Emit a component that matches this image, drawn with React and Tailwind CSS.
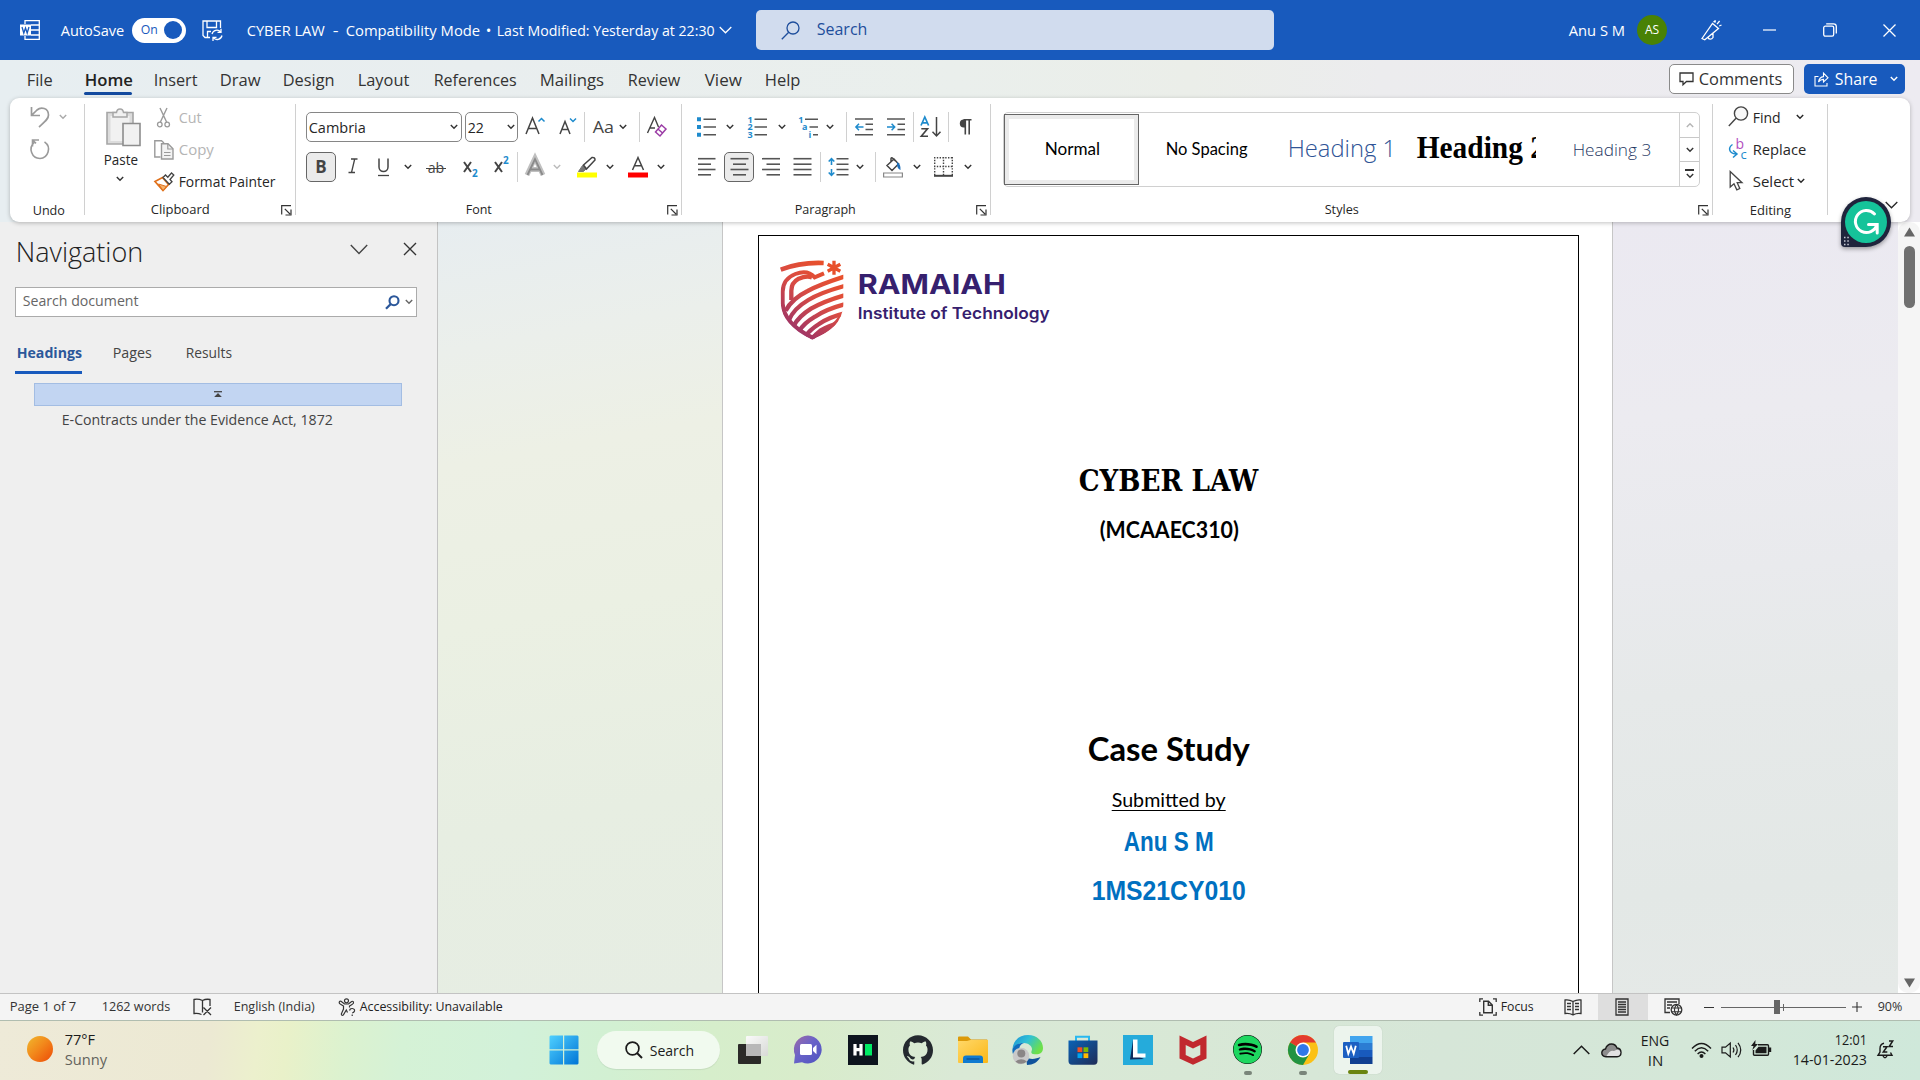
import React, { useLayoutEffect, useRef, useState } from "react";
import { FaSpotify } from "react-icons/fa";
import { SiGithub } from "react-icons/si";

// A one-line label whose glyphs are condensed or widened to fill a given width.
function Fit({ w, className = "", children }) {
  const ref = useRef(null);
  const [style, setStyle] = useState({});
  useLayoutEffect(() => {
    const natural = ref.current.offsetWidth;
    setStyle({ transform: `translateX(0.7px) scaleX(${(w - 1) / natural})` });
  }, [w]);
  return (
    <span className={`block shrink-0 whitespace-nowrap ${className}`} style={{ width: w }}>
      <span ref={ref} className="inline-block origin-left" style={style}>
        {children}
      </span>
    </span>
  );
}

function Svg({ w, h, className = "", children, vb }) {
  return (
    <svg
      width={w}
      height={h}
      viewBox={vb || `0 0 ${w} ${h}`}
      fill="none"
      stroke="currentColor"
      className={`block shrink-0 overflow-visible ${className}`}
    >
      {children}
    </svg>
  );
}

const Chev = ({ className = "text-[#333]" }) => (
  <Svg w={8} h={6} className={className}>
    <path d="M.8 1L4 4.3L7.2 1" strokeWidth="1.4" />
  </Svg>
);

const Sep = ({ className }) => <div className={`h-[30px] w-px shrink-0 bg-[#d0d0d0] ${className}`} />;
const GroupSep = () => <div className="mt-[6px] h-[111px] w-px shrink-0 bg-[#d0d0d0]" />;

const Launcher = ({ className }) => (
  <Svg w={11} h={11} className={`text-[#333] ${className}`}>
    <path d="M.7 9.5V.7H10M3.8 3.8L9 9M10 4.5V10H4.5" strokeWidth="1.2" />
  </Svg>
);

const Lines = ({ rows, h = 20, w = 19 }) => (
  <Svg w={w} h={h} className="text-[#555]">
    {rows.map(([x1, x2, y], i) => (
      <path key={i} d={`M${x1} ${y}H${x2}`} strokeWidth="1.6" />
    ))}
  </Svg>
);

function TitleBar() {
  return (
    <header className="flex h-[60px] shrink-0 items-center bg-[#185abd] text-[15px] text-white">
      <Svg w={20} h={20} className="ml-[20px]">
        <path d="M5 4V.7H19.3V19.3H5V16M11 5H19M11 10H19M11 15H19" strokeWidth="1.3" />
        <path d="M0 4.5H11V15.5H0Z" fill="white" stroke="none" />
        <path d="M2 7L3.8 13L5.5 8L7.2 13L9 7" stroke="#185abd" strokeWidth="1.3" />
      </Svg>
      <Fit w={65} className="ml-[20px]">AutoSave</Fit>
      <div className="ml-[7px] flex h-[25px] w-[54px] shrink-0 items-center rounded-full bg-white pl-[8px] text-[13px] text-[#185abd]">
        <Fit w={18}>On</Fit>
        <div className="ml-[6px] size-[18px] rounded-full bg-[#185abd]" />
      </div>
      <Svg w={21} h={21} className="ml-[16px]">
        <path d="M8 17.5H3L1 15.5V1H18.5V8M5 1V7.5H14.5V1M5.5 17.5V11.5H9" strokeWidth="1.3" />
        <path d="M10 14A5 5 0 0 1 18.7 12M19 8.8V12.3H15.5M20 15.5A5 5 0 0 1 11.3 17.7M11 21V17.3H14.5" strokeWidth="1.3" />
      </Svg>
      <Fit w={79} className="ml-[23px]">CYBER LAW</Fit>
      <Fit w={7} className="ml-[7px]">-</Fit>
      <Fit w={135} className="ml-[6px]">Compatibility Mode</Fit>
      <Fit w={7} className="ml-[5px]">•</Fit>
      <Fit w={219} className="ml-[4px]">Last Modified: Yesterday at 22:30</Fit>
      <Svg w={13} h={8} className="ml-[4px]">
        <path d="M.7 1L6.5 6.8L12.3 1" strokeWidth="1.3" />
      </Svg>
      <div className="ml-[24px] flex h-[40px] w-[518px] shrink-0 items-center rounded-[5px] bg-[#d1dcee] text-[#1e4e9c]">
        <Svg w={19} h={19} className="ml-[25px]">
          <circle cx="12" cy="7" r="6" strokeWidth="1.3" />
          <path d="M7.7 11.3L.8 18.2" strokeWidth="1.3" />
        </Svg>
        <Fit w={52} className="-mt-[2px] ml-[16px] text-[16px]">Search</Fit>
      </div>
      <Fit w={57} className="ml-[294px]">Anu S M</Fit>
      <div className="ml-[12px] flex size-[30px] shrink-0 items-center justify-center rounded-full bg-[#498205] text-[12px]">
        AS
      </div>
      <Svg w={21} h={21} className="ml-[34px]">
        <path d="M1 18.5L11.5 3.5L17.5 8.5L3.8 19.8L1 18.5ZM7 17.5C7.5 19.5 10.5 20 12 17.5V13M12.5 2L14.5 .5M16 4.2L18.6 1M18.2 6L20.5 5M14 2.7L14.4 .5" strokeWidth="1.3" />
      </Svg>
      <Svg w={13} h={13} className="ml-[41px]">
        <path d="M0 6H13" strokeWidth="1.2" />
      </Svg>
      <Svg w={14} h={14} className="ml-[47px]">
        <rect x=".7" y="3.2" width="10" height="10" rx="1.6" strokeWidth="1.3" />
        <path d="M3.2 .8H10.5Q13.3 .8 13.3 3.5V10.6" strokeWidth="1.3" />
      </Svg>
      <Svg w={13} h={13} className="ml-[46px]">
        <path d="M.5 .5L12.5 12.5M12.5 .5L.5 12.5" strokeWidth="1.3" />
      </Svg>
    </header>
  );
}

function Tabs() {
  return (
    <nav className="flex h-[38px] shrink-0 items-start text-[17px] leading-[40px] text-[#333]">
      <Fit w={27} className="ml-[26px]">File</Fit>
      <div className="ml-[30px] flex w-[50px] shrink-0 flex-col items-center">
        <Fit w={49} className="h-[32px] font-semibold text-[#222]">Home</Fit>
        <div className="h-[3px] w-[48px] rounded-full bg-[#134a9f]" />
      </div>
      <Fit w={45} className="ml-[20px]">Insert</Fit>
      <Fit w={42} className="ml-[21px]">Draw</Fit>
      <Fit w={53} className="ml-[21px]">Design</Fit>
      <Fit w={53} className="ml-[22px]">Layout</Fit>
      <Fit w={84} className="ml-[23px]">References</Fit>
      <Fit w={65} className="ml-[22px]">Mailings</Fit>
      <Fit w={54} className="ml-[23px]">Review</Fit>
      <Fit w={38} className="ml-[23px]">View</Fit>
      <Fit w={37} className="ml-[22px]">Help</Fit>
      <div className="mt-[4px] ml-[868px] flex h-[30px] w-[125px] shrink-0 items-center rounded-[5px] border border-[#8a8a8a] bg-white leading-[28px]">
        <Svg w={15} h={14} className="ml-[9px]">
          <path d="M1 1H14V9.5H7.5L4 12.8V9.5H1Z" strokeWidth="1.3" />
        </Svg>
        <Fit w={85} className="ml-[4px]">Comments</Fit>
      </div>
      <div className="mt-[4px] ml-[10px] flex h-[30px] w-[101px] shrink-0 items-center rounded-[5px] bg-[#185abd] leading-[28px] text-white">
        <Svg w={15} h={15} className="ml-[10px]">
          <path d="M4.5 4.5H1V14H13V11M4.5 10C5 6.5 7 4.8 9.5 4.6V1.2L14 5.8L9.5 10V7.4C7 7.4 5.8 8.2 4.5 10Z" strokeWidth="1.1" />
        </Svg>
        <Fit w={44} className="ml-[5px]">Share</Fit>
        <Chev className="ml-[12px] text-white" />
      </div>
    </nav>
  );
}

function UndoGroup() {
  return (
    <section className="flex w-[74px] shrink-0 flex-col">
      <div className="flex h-[103px] flex-col pt-[8px] text-[#9a9a9a]">
        <div className="flex items-center pl-[20px]">
          <Svg w={20} h={22}>
            <path d="M1.5 1V9.5H10M1.8 9.2L7 4C11 .5 18.5 2 18.5 9C18.5 13 15 15.5 9 21" strokeWidth="1.7" />
          </Svg>
          <Chev className="ml-[9px] text-[#aaa]" />
        </div>
        <Svg w={22} h={22} className="mt-[10px] ml-[19px]">
          <path d="M3.5 8.5V2H10M3.8 2.2L7 5.4M15.5 3.8C23 9 19 20.5 11 20.5C2.5 20.5 -.8 10 5 4.7" strokeWidth="1.6" />
        </Svg>
      </div>
      <Fit w={33} className="-mt-px ml-[22px] text-[13px] leading-[20px]">Undo</Fit>
    </section>
  );
}

function ClipboardGroup() {
  return (
    <section className="flex w-[210px] shrink-0 flex-col">
      <div className="flex h-[103px]">
        <div className="ml-[18px] flex w-[37px] shrink-0 flex-col items-center pt-[10px]">
          <Svg w={35} h={39} className="ml-[4px]">
            <path d="M1 4.5H27V36H1Z" fill="#dcdcdc" stroke="#a6a6a6" strokeWidth="1.6" />
            <path d="M4.5 8H23.5V33H4.5Z" fill="#f1f1f1" stroke="none" />
            <path d="M7 9V4.5H10.5C11 -.3 17 -.3 17.5 4.5H21V9Z" fill="#f1f1f1" stroke="#a6a6a6" strokeWidth="1.5" />
            <path d="M17 15.5H34V37.5H17Z" fill="#f1f1f1" stroke="#8d8d8d" strokeWidth="1.6" />
          </Svg>
          <Fit w={35} className="mt-[3px] mr-[2px] leading-[19px]">Paste</Fit>
          <Chev className="mt-[7px] mr-[3px] text-[#333]" />
        </div>
        <div className="ml-[14px] flex flex-col pt-[4px] text-[#b5b5b5]">
          <div className="flex h-[32px] items-center">
            <Svg w={20} h={20} className="text-[#9a9a9a]">
              <path d="M6 0L12.6 14M13 0L6.4 14" strokeWidth="1.4" />
              <circle cx="5.8" cy="16.5" r="2.3" strokeWidth="1.3" />
              <circle cx="13.2" cy="16.5" r="2.3" strokeWidth="1.3" />
            </Svg>
            <Fit w={24} className="-mt-[2px] ml-[4px]">Cut</Fit>
          </div>
          <div className="flex h-[32px] items-center">
            <Svg w={20} h={20} className="text-[#9a9a9a]">
              <path d="M6.5 17H.8V.8H7.5L10 3" strokeWidth="1.4" />
              <path d="M7.5 3.8H14L19 8.8V19H7.5Z" fill="#f3f3f3" strokeWidth="1.4" />
              <path d="M13.8 4V9H19M10 12.5H16.5M10 15.5H16.5" strokeWidth="1.2" />
            </Svg>
            <Fit w={36} className="-mt-[2px] ml-[4px]">Copy</Fit>
          </div>
          <div className="flex h-[32px] items-center text-[#262626]">
            <Svg w={21} h={20}>
              <path d="M8.5 5.5L14.5 12.5L9 18.5L1 9.5Z" fill="#fff" stroke="#e0701a" strokeWidth="1.7" />
              <path d="M4.5 12L12.5 14.5L9 18.5Z" fill="#f7b26a" stroke="#e0701a" strokeWidth="1" />
              <path d="M9 5.5L11.5 3L13.8 5.2L17.5 1L19.8 3L16 7.5L18 9.8L15.3 12.3Z" fill="#fff" stroke="#444" strokeWidth="1.3" />
            </Svg>
            <Fit w={98} className="-mt-[2px] ml-[3px]">Format Painter</Fit>
          </div>
        </div>
      </div>
      <div className="-mt-px flex items-center text-[13px] leading-[19px]">
        <Fit w={60} className="ml-[65px]">Clipboard</Fit>
        <Launcher className="mt-px ml-[71px]" />
      </div>
    </section>
  );
}

function FontGroup() {
  return (
    <section className="flex w-[385px] shrink-0 flex-col">
      <div className="h-[103px] pt-[14px] text-[#444]">
        <div className="flex h-[30px] items-center">
          <div className="ml-[10px] flex h-[30px] w-[156px] shrink-0 items-center rounded-[5px] border border-[#868686] text-[#262626]">
            <Fit w={58} className="ml-[1px]">Cambria</Fit>
            <Chev className="ml-[84px] text-[#333]" />
          </div>
          <div className="ml-[3px] flex h-[30px] w-[53px] shrink-0 items-center rounded-[5px] border border-[#868686] text-[#262626]">
            <Fit w={17} className="ml-[1px]">22</Fit>
            <Chev className="ml-[23px] text-[#333]" />
          </div>
          <Svg w={20} h={22} className="ml-[7px]">
            <path d="M1 18L7.5 2L14 18M3 12.5H12" strokeWidth="1.5" />
            <path d="M13.5 5.5L16.5 2.5L19.5 5.5" stroke="#1e8bcd" strokeWidth="1.5" />
          </Svg>
          <Svg w={18} h={22} className="ml-[14px]">
            <path d="M1 18L6 5.5L11 18M3 13.5H9" strokeWidth="1.5" />
            <path d="M11 2.5L14 5.5L17 2.5" stroke="#1e8bcd" strokeWidth="1.5" />
          </Svg>
          <Sep className="ml-[7px]" />
          <Fit w={22} className="ml-[7px] text-[17px]">Aa</Fit>
          <Chev className="ml-[5px] text-[#333]" />
          <Sep className="ml-[12px]" />
          <Svg w={22} h={22} className="ml-[6px]">
            <path d="M1.5 17L8.5 1.5L12.5 11M4 12H9" strokeWidth="1.4" />
            <path d="M9.5 16L15.5 9L20 13L14 20Z M12 13L16.8 17.2" fill="#fff" stroke="#9b3ba5" strokeWidth="1.5" />
          </Svg>
        </div>
        <div className="mt-[10px] flex h-[30px] items-center">
          <div className="ml-[10px] flex h-[30px] w-[30px] shrink-0 items-center justify-center rounded-[5px] border border-[#666] bg-[#ebebeb] pb-px text-[17px] font-bold">
            B
          </div>
          <Svg w={10} h={16} className="mt-[-2px] ml-[12px]">
            <path d="M3 1H9.5M.5 14.5H7M6.7 1L3.5 14.5" strokeWidth="1.3" />
          </Svg>
          <Svg w={13} h={20} className="ml-[19px]">
            <path d="M2 1.5V10C2 16 11 16 11 10V1.5" strokeWidth="1.5" />
            <path d="M1 18.5H12" strokeWidth="1.3" />
          </Svg>
          <Chev className="ml-[14px] text-[#333]" />
          <span className="relative ml-[15px] w-[18px] shrink-0 text-center text-[15px]">
            <Fit w={18}>ab</Fit>
            <span className="absolute top-[12px] left-[-1px] h-[1.5px] w-[20px] bg-[#444]" />
          </span>
          <Svg w={16} h={24} className="ml-[18px]">
            <path d="M1 7L8 17M8 7L1 17" strokeWidth="2" />
            <text x="9" y="22" fontSize="10" fontWeight="700" fill="#1e8bcd" stroke="none">2</text>
          </Svg>
          <Svg w={16} h={24} className="ml-[15px]">
            <path d="M1 7L8 17M8 7L1 17" strokeWidth="2" />
            <text x="9" y="9" fontSize="10" fontWeight="700" fill="#1e8bcd" stroke="none">2</text>
          </Svg>
          <Sep className="ml-[7px]" />
          <Svg w={20} h={22} className="ml-[7px]">
            <path d="M2 19L10 2L18 19M5 13.5H15" stroke="#c0c0c0" strokeWidth="5" />
            <path d="M2.5 19L10 3L17.5 19M5 13.5H15" stroke="#8a8a8a" strokeWidth="1.8" />
          </Svg>
          <Chev className="ml-[8px] text-[#bbb]" />
          <Svg w={20} h={22} className="ml-[16px]">
            <path d="M0 16.5H20V21.5H0Z" fill="#ffff00" stroke="none" />
            <path d="M1.5 15.5L5.5 9.5L9 13L6.5 15.5Z" fill="#777" stroke="#777" />
            <path d="M6.5 9L15 1.5Q18 1 18 4L9.5 13Z" fill="#fff" strokeWidth="1.5" />
          </Svg>
          <Chev className="ml-[9px] text-[#333]" />
          <Svg w={20} h={22} className="ml-[14px]">
            <path d="M0 16.5H20V21.5H0Z" fill="#ff0000" stroke="none" />
            <path d="M4.5 14L10 1.5L15.5 14M6.3 9.8H13.7" strokeWidth="1.5" />
          </Svg>
          <Chev className="ml-[9px] text-[#333]" />
        </div>
      </div>
      <div className="-mt-px flex items-center text-[13px] leading-[19px]">
        <Fit w={27} className="ml-[169px]">Font</Fit>
        <Launcher className="mt-px ml-[175px]" />
      </div>
    </section>
  );
}

function ParagraphGroup() {
  const small = { fontSize: 9, fontWeight: 700, fill: "#1e8bcd", stroke: "none" };
  return (
    <section className="flex w-[308px] shrink-0 flex-col">
      <div className="h-[103px] pt-[14px] text-[#444]">
        <div className="flex h-[30px] items-center">
          <Svg w={19} h={20} className="ml-[15px] text-[#555]">
            <path d="M0 .3H4V4.3H0ZM0 8H4V12H0ZM0 15.7H4V19.7H0Z" fill="#1e8bcd" stroke="none" />
            <path d="M6.5 2.3H19M6.5 10H19M6.5 17.7H19" strokeWidth="1.5" />
          </Svg>
          <Chev className="ml-[10px] text-[#333]" />
          <Svg w={19} h={22} className="ml-[14px] text-[#555]">
            <text x="-.5" y="6.8" {...small}>1</text>
            <text x="-.5" y="14.3" {...small}>2</text>
            <text x="-.5" y="21.8" {...small}>3</text>
            <path d="M6.5 3.3H19M6.5 11H19M6.5 18.7H19" strokeWidth="1.5" />
          </Svg>
          <Chev className="ml-[11px] text-[#333]" />
          <Svg w={19} h={22} className="ml-[13px] text-[#555]">
            <text x="-.8" y="6.8" {...small}>1</text>
            <text x="3" y="14.3" {...small}>a</text>
            <text x="9.5" y="21.8" {...small}>i</text>
            <path d="M6 3.3H19M10.5 11H19M14 18.7H19" strokeWidth="1.5" />
          </Svg>
          <Chev className="ml-[8px] text-[#333]" />
          <Sep className="ml-[12px]" />
          <Svg w={18} h={20} className="ml-[8px] text-[#555]">
            <path d="M0 2H18M10.5 7.3H18M10.5 12.5H18M0 17.8H18" strokeWidth="1.5" />
            <path d="M8.5 10H1M4 6.8L.9 10L4 13.2" stroke="#1e8bcd" strokeWidth="1.5" />
          </Svg>
          <Svg w={18} h={20} className="ml-[14px] text-[#555]">
            <path d="M0 2H18M10.5 7.3H18M10.5 12.5H18M0 17.8H18" strokeWidth="1.5" />
            <path d="M0 10H7.5M4.6 6.8L7.7 10L4.6 13.2" stroke="#1e8bcd" strokeWidth="1.5" />
          </Svg>
          <Sep className="ml-[8px]" />
          <Svg w={21} h={22} className="ml-[6px]">
            <path d="M1 9.5L4.8 1L8.6 9.5M2.2 6.8H7.4" stroke="#1e8bcd" strokeWidth="1.7" />
            <path d="M1.3 12.8H7.5L1.3 20.2H8" strokeWidth="1.6" />
            <path d="M16.5 1V20M12.5 15.8L16.5 20L20.5 15.8" strokeWidth="1.5" />
          </Svg>
          <Sep className="ml-[7px]" />
          <Svg w={13} h={18} className="ml-[10px]">
            <path d="M6 1.5H4.8A4 4 0 0 0 4.8 9.5H6Z" fill="#444" stroke="none" />
            <path d="M4.5 1.8H12.5M6.3 1.5V16.5M10.2 1.5V16.5" strokeWidth="1.6" />
          </Svg>
        </div>
        <div className="mt-[10px] flex h-[30px] items-center">
          <div className="ml-[15px]">
            <Lines rows={[[1, 18.5, 1.7], [1, 14, 7.2], [1, 18.5, 12.5], [1, 14, 17.8]]} />
          </div>
          <div className="ml-[8px] flex h-[30px] w-[30px] shrink-0 items-center justify-center rounded-[5px] border border-[#666] bg-[#ebebeb]">
            <Lines rows={[[0.5, 18.5, 1.7], [3, 16, 7.2], [0.5, 18.5, 12.5], [3, 16, 17.8]]} />
          </div>
          <div className="ml-[8px]">
            <Lines w={18} rows={[[0, 18, 1.7], [4.5, 18, 7.2], [0, 18, 12.5], [4.5, 18, 17.8]]} />
          </div>
          <div className="ml-[13px]">
            <Lines rows={[[0.5, 18.5, 1.7], [0.5, 18.5, 7.2], [0.5, 18.5, 12.5], [0.5, 18.5, 17.8]]} />
          </div>
          <Sep className="ml-[8px]" />
          <Svg w={21} h={20} className="ml-[7px] text-[#555]">
            <path d="M8.5 1.7H20.5M8.5 7.2H20.5M8.5 12.5H20.5M8.5 17.8H20.5" strokeWidth="1.5" />
            <path d="M3.5 1.8V8M.7 4.5L3.5 1.7L6.3 4.5M3.5 12V18.2M.7 15.5L3.5 18.3L6.3 15.5" stroke="#1e8bcd" strokeWidth="1.6" />
          </Svg>
          <Chev className="ml-[7px] text-[#333]" />
          <Sep className="ml-[11px]" />
          <Svg w={20} h={22} className="ml-[7px]">
            <path d="M.6 17H19.4V21H.6Z" fill="#fff" stroke="#888" strokeWidth="1.2" />
            <path d="M4 9.5L11 3L15.5 8L9 14.5ZM8 5.5V2.5Q8.5 1 10 2.5L12.5 5" strokeWidth="1.5" />
            <path d="M14 6Q18 8 17.5 14Q14.5 13 14 9Z" fill="#1e6fb8" stroke="none" />
          </Svg>
          <Chev className="ml-[10px] text-[#333]" />
          <Svg w={19} h={20} className="ml-[13px]">
            <path d="M.7 0V19M18.3 0V19M9.5 0V19M0 .7H19M0 9.5H19" strokeWidth="1.4" strokeDasharray="1.4 1.4" />
            <path d="M0 18.8H19" strokeWidth="2" />
          </Svg>
          <Chev className="ml-[11px] text-[#333]" />
        </div>
      </div>
      <div className="-mt-px flex items-center text-[13px] leading-[19px]">
        <Fit w={62} className="ml-[112px]">Paragraph</Fit>
        <Launcher className="mt-px ml-[120px]" />
      </div>
    </section>
  );
}

function StylesGroup() {
  return (
    <section className="flex w-[721px] shrink-0 flex-col">
      <div className="h-[103px] pt-[14px]">
        <div className="ml-[12px] flex h-[75px] w-[697px] rounded-[5px] border border-[#d0d0d0] font-[Lato] text-[16.5px] text-black">
          <div className="mt-[1px] flex h-[71px] w-[135px] shrink-0 items-center justify-center border border-[#666] bg-white shadow-[inset_0_0_0_4px_#ebebeb]">
            <Fit w={56}>Normal</Fit>
          </div>
          <div className="flex w-[135px] shrink-0 items-center justify-center">
            <Fit w={83}>No Spacing</Fit>
          </div>
          <div className="flex w-[135px] shrink-0 items-center justify-center text-[#2f5496]">
            <Fit w={109} className="-mt-[3px] font-[Open_Sans] text-[24px] font-light">Heading 1</Fit>
          </div>
          <div className="flex w-[135px] shrink-0 items-center">
            <div className="ml-[7px] w-[120px] overflow-hidden whitespace-nowrap">
              <Fit w={129} className="-mt-[3px] font-[Liberation_Serif] text-[31px] font-bold">Heading 2</Fit>
            </div>
          </div>
          <div className="flex w-[135px] shrink-0 items-center justify-center text-[#1f3763]">
            <Fit w={80} className="font-[Open_Sans] text-[17px] font-light">Heading 3</Fit>
          </div>
          <div className="flex flex-1 flex-col border-l border-[#d0d0d0]">
            <div className="flex h-[24px] items-center justify-center">
              <Chev className="rotate-180 text-[#b5b5b5]" />
            </div>
            <div className="flex h-[25px] items-center justify-center border-y border-[#c8c8c8]">
              <Chev />
            </div>
            <div className="flex h-[24px] flex-col items-center justify-center gap-[2px]">
              <div className="h-[1.5px] w-[9px] bg-[#333]" />
              <Chev />
            </div>
          </div>
        </div>
      </div>
      <div className="-mt-px flex items-center text-[13px] leading-[19px]">
        <Fit w={35} className="ml-[333px]">Styles</Fit>
        <Launcher className="mt-px ml-[339px]" />
      </div>
    </section>
  );
}

function EditingGroup() {
  return (
    <section className="flex w-[114px] shrink-0 flex-col">
      <div className="flex h-[103px] flex-col pt-[4px]">
        <div className="flex h-[32px] items-center pl-[15px]">
          <Svg w={21} h={21} className="-mt-[3px] text-[#444]">
            <circle cx="13" cy="7.5" r="6.6" fill="#f8f8f8" strokeWidth="1.4" />
            <path d="M8 12.2L.8 20" strokeWidth="1.4" />
          </Svg>
          <Fit w={29} className="-mt-[2px] ml-[3px]">Find</Fit>
          <Chev className="-mt-[2px] ml-[15px]" />
        </div>
        <div className="flex h-[32px] items-center pl-[15px]">
          <Svg w={21} h={22} className="-mt-[2px]">
            <text x="7.5" y="11" fontSize="14" fill="#b24fc0" stroke="none">b</text>
            <text x="12.5" y="21" fontSize="13" fill="#1e8bcd" stroke="none">c</text>
            <path d="M4.5 6.5C0 9.5 .5 15.5 8 16M5 12.5L9 16L5 19.5" stroke="#1e8bcd" strokeWidth="1.5" />
          </Svg>
          <Fit w={55} className="-mt-[2px] ml-[3px]">Replace</Fit>
        </div>
        <div className="flex h-[32px] items-center pl-[15px]">
          <Svg w={21} h={22} className="-mt-[2px] text-[#444]">
            <path d="M2.2 1.5V17L6 13.8L8.8 19.8L11.8 18.5L9.2 12.7H14Z" strokeWidth="1.3" />
          </Svg>
          <Fit w={42} className="-mt-[2px] ml-[3px]">Select</Fit>
          <Chev className="-mt-[3px] ml-[3px]" />
        </div>
      </div>
      <Fit w={42} className="-mt-px ml-[36px] text-[13px] leading-[20px]">Editing</Fit>
    </section>
  );
}

function Ribbon() {
  return (
    <div className="relative z-10 mx-[10px] flex h-[124px] shrink-0 rounded-[9px] bg-white text-[15px] text-[#262626] shadow-[0_1px_4px_rgba(0,0,0,0.25)]">
      <UndoGroup />
      <GroupSep />
      <ClipboardGroup />
      <GroupSep />
      <FontGroup />
      <GroupSep />
      <ParagraphGroup />
      <GroupSep />
      <StylesGroup />
      <GroupSep />
      <EditingGroup />
      <GroupSep />
      <Svg w={13} h={8} className="mb-[13px] ml-[57px] self-end">
        <path d="M.7 1L6.5 6.8L12.3 1" strokeWidth="1.3" />
      </Svg>
      <Svg w={52} h={52} className="absolute top-[98px] left-[1830px] drop-shadow-[0_2px_2px_rgba(0,0,0,0.35)]">
        <path d="M26 1A25 25 0 0 1 26 51H5Q1 51 1 47V26A25 25 0 0 1 26 1Z" fill="#1f243c" stroke="none" />
        <circle cx="26" cy="26" r="21" fill="#15c39a" stroke="none" />
        <path d="M34.5 18A11 11 0 1 0 37 28.5M28.5 28.5H37.2V37" stroke="#fff" strokeWidth="3" strokeLinecap="round" />
        <path d="M4 41.5H9M4 45H9M4 48.5H9" stroke="#c8cad4" strokeWidth="1.5" strokeDasharray="1.5 1.8" />
      </Svg>
    </div>
  );
}

function NavigationPane() {
  return (
    <aside className="flex w-[438px] shrink-0 flex-col border-r border-[#c3c3c3] bg-[#efefef] pl-[15px] text-[#444]">
      <div className="flex h-[65px] items-start pt-[10px]">
        <Fit w={129} className="text-[27px] leading-[40px] font-light text-[#222]">Navigation</Fit>
        <Svg w={18} h={11} className="mt-[12px] ml-[206px]">
          <path d="M.8 1L9 9.4L17.2 1" strokeWidth="1.4" />
        </Svg>
        <Svg w={14} h={14} className="mt-[10px] ml-[35px] text-[#333]">
          <path d="M1 1L13 13M13 1L1 13" strokeWidth="1.4" />
        </Svg>
      </div>
      <div className="flex h-[30px] w-[402px] shrink-0 items-center border border-[#ababab] bg-white text-[15px] text-[#666]">
        <Fit w={117} className="ml-[6px] leading-[24px] pb-[4px]">Search document</Fit>
        <Svg w={15} h={15} className="ml-[246px] text-[#2b579a]">
          <circle cx="9" cy="5.7" r="4.5" strokeWidth="2.1" />
          <path d="M5.8 9L1 13.8" strokeWidth="2.3" />
        </Svg>
        <Chev className="ml-[5px]" />
      </div>
      <div className="mt-[20px] flex text-[15px] leading-[30px]">
        <div className="w-[67px]">
          <Fit w={66} className="ml-[1px] h-[34px] font-bold text-[#2b579a]">Headings</Fit>
          <div className="h-[3px] w-[67px] bg-[#185abd]" />
        </div>
        <Fit w={40} className="ml-[30px]">Pages</Fit>
        <Fit w={47} className="ml-[33px]">Results</Fit>
      </div>
      <div className="mt-[9px] ml-[19px] flex h-[23px] w-[368px] shrink-0 items-center justify-center border border-[#a3bde3] bg-[#c2d5f2]">
        <Svg w={8} h={7}>
          <path d="M0 .7H8" strokeWidth="1.3" />
          <path d="M4 2L7.8 6H.2Z" fill="#444" stroke="none" />
        </Svg>
      </div>
      <Fit w={272} className="ml-[46px] text-[15px] leading-[26px]">E-Contracts under the Evidence Act, 1872</Fit>
    </aside>
  );
}

function Crest() {
  return (
    <Svg w={64} h={81} vb="179 117 192 243">
      <defs>
        <linearGradient id="crest" gradientUnits="userSpaceOnUse" x1="340" y1="150" x2="210" y2="330">
          <stop offset="0" stopColor="#e8502b" />
          <stop offset=".45" stopColor="#d94b43" />
          <stop offset="1" stopColor="#9c3468" />
        </linearGradient>
        <clipPath id="crestClip">
          <path d="M179 117H369V255Q365 325 275 359Q184 325 181 250Z" />
        </clipPath>
      </defs>
      <g clipPath="url(#crestClip)" stroke="url(#crest)" strokeWidth="13">
        <path d="M181 149Q240 126 310 129" strokeWidth="14" />
        <path d="M341 122V164M322 133L360 154M360 133L322 154" stroke="#e8502b" strokeWidth="10" />
        <path d="M311 160L283 172Q262 148 225 162Q188 176 187 215V250Q190 310 275 352Q350 320 362 285" strokeWidth="12" />
        <path d="M275 172Q258 166 235 176Q213 188 213 212V240" />
        <path d="M372 170Q300 193 262 213Q215 236 196 272" />
        <path d="M372 198Q300 218 264 240Q220 266 206 300" />
        <path d="M372 226Q310 244 272 266Q234 290 220 318" />
        <path d="M372 253Q316 268 284 290Q250 310 236 334" />
        <path d="M372 280Q324 292 296 312Q268 330 256 348" />
        <path d="M362 307Q322 318 300 332Q284 344 274 358" />
      </g>
    </Svg>
  );
}

function Page() {
  return (
    <article className="flex w-[891px] shrink-0 flex-col border-x border-[#c6c6c6] bg-white pt-[13px] pl-[35px] text-black">
      <div className="flex w-[821px] flex-1 flex-col items-center border-x border-t border-black">
        <div className="flex h-[198px] w-full pt-[23px] pl-[21px]">
          <Crest />
          <div className="ml-[13px] pt-[11px] font-[Inter] text-[#36206e]">
            <Fit w={149} className="text-[27px] leading-[30px] font-bold">RAMAIAH</Fit>
            <Fit w={193} className="text-[16px] leading-[26px] font-semibold">Institute of Technology</Fit>
          </div>
        </div>
        <Fit w={181} className="mt-[27px] h-[40px] font-['DejaVu_Serif_Condensed','DejaVu_Serif'] text-[29.5px] leading-[40px] font-bold">CYBER LAW</Fit>
        <Fit w={140} className="mt-[11px] h-[36px] font-[Lato] text-[22px] leading-[36px] font-bold">(MCAAEC310)</Fit>
        <Fit w={163} className="mt-[180px] h-[40px] font-[Lato] text-[33px] leading-[40px] font-bold">Case Study</Fit>
        <Fit w={115} className="mt-[16px] h-[30px] font-[Lato] text-[20px] leading-[30px]">
          <span className="underline decoration-1 underline-offset-[3px]">Submitted by</span>
        </Fit>
        <Fit w={91} className="mt-[8px] h-[40px] font-['Liberation_Sans_Narrow','Liberation_Sans'] text-[27px] leading-[40px] font-bold text-[#0070c0]">Anu S M</Fit>
        <Fit w={155} className="mt-[9px] h-[40px] font-['Liberation_Sans_Narrow','Liberation_Sans'] text-[27px] leading-[40px] font-bold text-[#0070c0]">1MS21CY010</Fit>
      </div>
    </article>
  );
}

function Document() {
  return (
    <main className="flex min-w-0 flex-1">
      <div className="w-[284px] shrink-0 bg-[linear-gradient(170deg,#e7edf0_0%,#ebefeb_16%,#edf0e5_30%,#ebf0e3_50%,#e7eee2_75%,#e6ede3_100%)]" />
      <Page />
      <div className="flex-1 bg-[linear-gradient(175deg,#ebe9f1_0%,#ecebf0_25%,#e9eaed_45%,#e6e9e9_60%,#e3e8e6_85%,#e5e9e7_100%)]" />
      <div className="flex w-[22px] shrink-0 flex-col items-center rounded-[10px] bg-[#f5f5f5] pt-[5px] pb-[5px]">
        <Svg w={11} h={10}>
          <path d="M5.5 .5L11 9.5H0Z" fill="#666" stroke="none" />
        </Svg>
        <div className="mt-[9px] h-[62px] w-[11px] rounded-full bg-[#707070]" />
        <Svg w={11} h={10} className="mt-auto rotate-180">
          <path d="M5.5 .5L11 9.5H0Z" fill="#666" stroke="none" />
        </Svg>
      </div>
    </main>
  );
}

function StatusBar() {
  return (
    <div className="flex h-[28px] shrink-0 items-center border-y border-t-[#c3c3c3] border-b-[#b0bdb0] bg-[#f4f4f4] text-[13px] text-[#333]">
      <Fit w={68} className="ml-[9px]">Page 1 of 7</Fit>
      <Fit w={69} className="ml-[24px]">1262 words</Fit>
      <Svg w={19} h={18} className="ml-[23px]">
        <path d="M9.5 2.5V14.5M9.5 2.5Q5 .5 1 1.5V15.5Q5 14.8 8.5 16.5M9.5 2.5Q13 .7 17 1.5V8M10.5 9.5L18 17M18 9.5L10.5 17" strokeWidth="1.3" />
      </Svg>
      <Fit w={82} className="ml-[21px]">English (India)</Fit>
      <Svg w={18} h={19} className="ml-[23px]">
        <circle cx="8.5" cy="2.8" r="2" strokeWidth="1.2" />
        <path d="M1.5 3.5Q2.5 2.5 4 4L6.5 6H10.5L13 4Q14.5 2.5 15.5 4Q16 5.5 14 6.5L11.5 8V9.5M1.5 3.5Q.5 5.5 3 6.5L5.5 8V11L3.3 16Q3.5 18 5.3 17L8.3 12L9.5 14.5M11.5 12.5Q12 10.3 14.3 10.5Q17 11 16.5 13Q16 14.5 14.2 15M14.2 16.5V18" strokeWidth="1.2" />
      </Svg>
      <Fit w={144} className="ml-[3px] text-[#222]">Accessibility: Unavailable</Fit>
      <Svg w={18} h={18} className="ml-[976px]">
        <path d="M4 .8H.8V4M14 .8H17.2V4M4 17.2H.8V14M14 17.2H17.2V14" strokeWidth="1.3" />
        <path d="M4.7 3.2H9.5L13.3 7V14.8H4.7ZM9.3 3.5V7.2H13" strokeWidth="1.4" />
      </Svg>
      <Fit w={34} className="ml-[3px] text-[#222]">Focus</Fit>
      <Svg w={18} h={17} className="ml-[30px]">
        <path d="M9 2.5Q5 .3 1 1V14.5Q5 13.8 9 15.8Q13 13.8 17 14.5V1Q13 .3 9 2.5ZM9 2.5V16M3 4.5H7M3 7.5H7M3 10.5H7M11 4.5H15M11 7.5H15M11 10.5H15" strokeWidth="1.3" />
      </Svg>
      <div className="ml-[16px] flex h-full w-[50px] shrink-0 items-center justify-center bg-[#dedede]">
        <Svg w={14} h={18} className="mr-[2px]">
          <path d="M1 1H13V17H1ZM3 4H11M3 6.5H11M3 9H11M3 11.5H11M3 14H11" strokeWidth="1.3" />
        </Svg>
      </div>
      <Svg w={19} h={18} className="ml-[16px]">
        <path d="M15 6V1H1V14.5H6M3 4H13M3 7H8M3 10H6" strokeWidth="1.3" />
        <circle cx="12.5" cy="11.8" r="5.3" strokeWidth="1.3" />
        <path d="M7.5 10H17.5M7.5 13.8H17.5M12.5 6.5Q8.5 11.8 12.5 17Q16.5 11.8 12.5 6.5" strokeWidth="1.1" />
      </Svg>
      <div className="ml-[21px] h-px w-[10px] bg-[#333]" />
      <div className="ml-[7px] h-px w-[53px] bg-[#666]" />
      <div className="h-[14px] w-[6px] bg-[#666]" />
      <div className="h-px w-[3px] bg-[#666]" />
      <div className="h-[7px] w-px bg-[#666]" />
      <div className="h-px w-[62px] bg-[#666]" />
      <Svg w={10} h={10} className="ml-[6px]">
        <path d="M5 0V10M0 5H10" strokeWidth="1.1" />
      </Svg>
      <Fit w={26} className="ml-[15px]">90%</Fit>
    </div>
  );
}

const AppCell = ({ children, bar }) => (
  <div className="flex w-[55px] shrink-0 flex-col items-center">
    <div className="flex h-[57px] items-center">{children}</div>
    {bar}
  </div>
);

const Dot = () => <div className="-mt-[7px] h-[4px] w-[8px] rounded-full bg-[#7a857a]" />;

function Taskbar() {
  return (
    <footer className="flex h-[59px] shrink-0 items-start bg-[linear-gradient(97deg,#eeead8_0%,#ece9d3_11%,#ecf0cd_13.5%,#e9f1c9_15%,#dcf2cf_18%,#d5f2d6_21%,#d2f1d9_27%,#d2f0d2_32%,#d6eecb_37%,#d8eccb_42%,#dae9d6_50%,#d8e8d6_62%,#d6e6d8_75%,#d4e7d8_88%,#cfe8da_100%)] text-[15px] text-[#1b1b1b]">
      <div className="mt-[15px] ml-[27px] size-[26px] shrink-0 rounded-full bg-[linear-gradient(135deg,#f0b92e,#f28a1c_45%,#ef5b0c_85%)]" />
      <div className="mt-[8px] ml-[11px] leading-[20px]">
        <Fit w={31}>77°F</Fit>
        <Fit w={43} className="text-[#63635c]">Sunny</Fit>
      </div>
      <Svg w={30} h={30} className="mt-[14px] ml-[442px]">
        <defs>
          <linearGradient id="win" x1="0" y1="0" x2="1" y2="1">
            <stop offset="0" stopColor="#4fd0ff" />
            <stop offset="1" stopColor="#0075d6" />
          </linearGradient>
        </defs>
        <path d="M1.5 .5H14V14.3H.5V1.5ZM15.2 .5H28.5L29.5 1.5V14.3H15.2ZM.5 15.5H14V29.5H1.5L.5 28.5ZM15.2 15.5H29.5V28.5L28.5 29.5H15.2Z" fill="url(#win)" stroke="none" />
      </Svg>
      <div className="mt-[10px] ml-[18px] flex h-[38px] w-[123px] shrink-0 items-center rounded-full bg-[#f1faef] shadow-[0_1px_1px_rgba(0,0,0,0.08)]">
        <Svg w={18} h={18} className="ml-[28px]">
          <circle cx="7.5" cy="7.5" r="6.4" strokeWidth="1.7" />
          <path d="M12 12L17 17" strokeWidth="1.9" />
        </Svg>
        <Fit w={46} className="ml-[6px]">Search</Fit>
      </div>
      <div className="ml-[5px] flex shrink-0">
        <AppCell>
          <Svg w={30} h={28}>
            <defs>
              <linearGradient id="tv" x1="0" y1="0" x2="1" y2="1">
                <stop offset="0" stopColor="#fafafa" />
                <stop offset="1" stopColor="#d8dad6" />
              </linearGradient>
            </defs>
            <rect x="0" y="8" width="23" height="20" rx="1" fill="#2b2a28" stroke="none" />
            <rect x="8" y="0" width="22" height="20" rx="1" fill="url(#tv)" stroke="none" />
            <path d="M8 8H23V20H8Z" fill="#b8b8b8" stroke="none" />
          </Svg>
        </AppCell>
        <AppCell>
          <Svg w={30} h={29}>
            <defs>
              <linearGradient id="chat" x1="0" y1="0" x2="1" y2="1">
                <stop offset="0" stopColor="#a06ba6" />
                <stop offset=".45" stopColor="#6a63c8" />
                <stop offset="1" stopColor="#4e52c0" />
              </linearGradient>
            </defs>
            <path d="M15 .5A14 14 0 1 1 9 27.3L1 28.5L2 20A14 14 0 0 1 15 .5Z" fill="url(#chat)" stroke="none" />
            <rect x="7" y="9" width="12" height="11" rx="1.5" fill="#fff" stroke="none" />
            <path d="M20 13L23.5 9.8V19.2L20 16Z" fill="#fff" stroke="none" />
          </Svg>
        </AppCell>
        <AppCell>
          <Svg w={30} h={30}>
            <path d="M0 0H30V30H0Z" fill="#0d141e" stroke="none" />
            <path d="M7 9V20.5M13 9V20.5M7 14.7H13" stroke="#fff" strokeWidth="3.2" />
            <path d="M17 9H24V20.5H17Z" fill="#00ea64" stroke="none" />
          </Svg>
        </AppCell>
        <AppCell>
          <SiGithub size={30} color="#24292f" />
        </AppCell>
        <AppCell>
          <Svg w={30} h={27}>
            <defs>
              <linearGradient id="fold" x1="0" y1="0" x2="1" y2="1">
                <stop offset="0" stopColor="#ffd869" />
                <stop offset="1" stopColor="#fbb717" />
              </linearGradient>
            </defs>
            <path d="M0 1.5Q0 .5 1 .5H10L13 3.5H29L30 4.5V9H0Z" fill="#dc9a0a" stroke="none" />
            <path d="M0 5H9L12.5 4H30V26Q30 27 29 27H1Q0 27 0 26Z" fill="url(#fold)" stroke="none" />
            <path d="M5 27V22.5Q5 19.5 8 19.5H22Q25 19.5 25 22.5V27Z" fill="#0f7ad0" stroke="none" />
            <path d="M8.5 23H21.5" stroke="#0a4f94" strokeWidth="1.3" />
          </Svg>
        </AppCell>
        <AppCell>
          <Svg w={31} h={30}>
            <defs>
              <linearGradient id="edge" x1="0" y1="0" x2="1" y2=".5">
                <stop offset="0" stopColor="#1c8fd6" />
                <stop offset=".5" stopColor="#2fc0d6" />
                <stop offset="1" stopColor="#6de04a" />
              </linearGradient>
            </defs>
            <path d="M.5 14C1 5 8 0 16 0C25 0 31 6 31 13C31 19 26 20 21 19C18 18 20 16 20 14C20 11 16 8 12 8C6 8 2 11 .5 14Z" fill="url(#edge)" stroke="none" />
            <path d="M.5 14C2 10 6 8 12 8C8 9 6 13 8 18L4 24C1 21 0 17 .5 14Z" fill="#0f6cbd" stroke="none" />
            <path d="M14 22C18 25 24 24 28.5 22C26 27 21 30 15 30Z" fill="#10539c" stroke="none" />
            <circle cx="9" cy="21" r="8.3" fill="#c9c9c9" stroke="none" />
            <circle cx="9.3" cy="18.5" r="4" fill="#8a8686" stroke="none" />
            <path d="M3.5 26.5Q9 22 15 26.5Q9 31 3.5 26.5Z" fill="#8a8686" stroke="none" />
          </Svg>
        </AppCell>
        <AppCell>
          <Svg w={30} h={30}>
            <defs>
              <linearGradient id="store" x1="0" y1="0" x2="1" y2="1">
                <stop offset="0" stopColor="#0a62b5" />
                <stop offset="1" stopColor="#1f2c58" />
              </linearGradient>
            </defs>
            <path d="M8 6V1.8H21V6" stroke="#29b8f0" strokeWidth="2" />
            <path d="M.5 5.5H29.5V26Q29.5 29.7 26 29.7H4Q.5 29.7 .5 26Z" fill="url(#store)" stroke="none" />
            <path d="M9.5 12.3H14.3V17.1H9.5Z" fill="#f25022" stroke="none" />
            <path d="M15.5 12.3H20.3V17.1H15.5Z" fill="#7fba00" stroke="none" />
            <path d="M9.5 18.3H14.3V23.1H9.5Z" fill="#00a4ef" stroke="none" />
            <path d="M15.5 18.3H20.3V23.1H15.5Z" fill="#ffb900" stroke="none" />
          </Svg>
        </AppCell>
        <AppCell>
          <Svg w={30} h={30}>
            <path d="M0 0H30V30H0Z" fill="#25abdb" stroke="none" />
            <path d="M10 5L7 24.5L21 24L10 19Z" fill="#0b2b5c" stroke="none" />
            <path d="M10 4.5H14.5V18.5H22.5V22.5H10Z" fill="#fff" stroke="none" />
          </Svg>
        </AppCell>
        <AppCell>
          <Svg w={28} h={30}>
            <path d="M.5 .5L14 7L27.5 .5V23.5L14 29.7L.5 23.5ZM6.7 10V20L14 23.4L21.3 20V10L14 13.5Z" fill="#c1292e" fillRule="evenodd" stroke="none" />
          </Svg>
        </AppCell>
        <AppCell bar={<Dot />}>
          <div className="rounded-full bg-black">
            <FaSpotify size={29} color="#1ed760" />
          </div>
        </AppCell>
        <AppCell bar={<Dot />}>
          <Svg w={30} h={30}>
            <circle cx="15" cy="15" r="15" fill="#fbc116" stroke="none" />
            <path d="M15 15L2 7.5A15 15 0 0 1 28 7.5H15Z" fill="#e33b2e" stroke="none" />
            <path d="M15 15L2 7.5A15 15 0 0 0 15 30L21.5 18.8Z" fill="#229342" stroke="none" />
            <circle cx="15" cy="15" r="7.5" fill="#fff" stroke="none" />
            <circle cx="15" cy="15" r="5.9" fill="#3078ea" stroke="none" />
          </Svg>
        </AppCell>
        <div className="mt-[5px] ml-[4px] flex h-[48px] w-[48px] shrink-0 flex-col items-center rounded-[5px] bg-[#ecf4ed] shadow-[0_0_1px_rgba(0,0,0,0.2)]">
          <Svg w={30} h={28} className="mt-[10px]">
            <path d="M7 0H29.5V7H7Z" fill="#41a5ee" stroke="none" />
            <path d="M7 7H29.5V14H7Z" fill="#2b7cd3" stroke="none" />
            <path d="M7 14H29.5V21H7Z" fill="#185abd" stroke="none" />
            <path d="M7 21H29.5V28H7Z" fill="#103f91" stroke="none" />
            <rect x="0" y="6" width="16" height="16" rx="1" fill="#1c5fc2" stroke="none" />
            <path d="M3.2 9.8L5.3 17.8L8 10.5L10.7 17.8L12.8 9.8" stroke="#fff" strokeWidth="1.8" />
          </Svg>
          <div className="mt-[6px] h-[4px] w-[20px] rounded-full bg-[#6a840f]" />
        </div>
      </div>
      <Svg w={17} h={10} className="mt-[24px] ml-[191px]">
        <path d="M.7 9L8.5 1.2L16.3 9" strokeWidth="1.5" />
      </Svg>
      <Svg w={21} h={15} className="mt-[22px] ml-[11px]">
        <path d="M5 13.8Q.8 13.5 .8 9.8Q1 6.5 4.5 6Q6 1 10.5 1Q14.5 1 16 5Q20 5.5 20 9.5Q20 13.5 16 13.8Z" fill="#8d8d8d" strokeWidth="1.4" />
        <path d="M5.5 13Q9 6.5 13 8Q19 5 19.3 9.5Q19 13 16 13Z" fill="#e2e2e2" stroke="none" />
      </Svg>
      <div className="mt-[9px] ml-[18px] flex w-[30px] shrink-0 flex-col items-center leading-[20px]">
        <Fit w={30}>ENG</Fit>
        <Fit w={16}>IN</Fit>
      </div>
      <Svg w={21} h={17} className="mt-[21px] ml-[21px]">
        <path d="M1 6.5Q10.5 -3.5 20 6.5M3.8 9.2Q10.5 2.5 17.2 9.2M6.6 12Q10.5 8 14.4 12" strokeWidth="1.4" />
        <circle cx="10.5" cy="14" r="2" fill="currentColor" stroke="none" />
      </Svg>
      <Svg w={21} h={18} className="mt-[20px] ml-[9px]">
        <path d="M1 6.2H4.5L9.3 2V16L4.5 11.8H1ZM12 6.5Q13.8 9 12 11.5M14.5 4Q18 9 14.5 14M17 1.8Q22.5 9 17 16.2" strokeWidth="1.2" />
      </Svg>
      <Svg w={21} h={17} className="mt-[19px] ml-[9px]">
        <path d="M7 4.7H16.5Q17.5 4.7 17.5 5.7V14.3Q17.5 15.3 16.5 15.3H3.5Q2.5 15.3 2.5 14.3V10" strokeWidth="1.4" />
        <path d="M7.5 6.8H15.5V13.3H4.5V10.5ZM18 7.5H20.2V12H18ZM4.5 0L0 6H2.5L1.3 10L7 4H4.3Z" fill="currentColor" stroke="none" />
      </Svg>
      <div className="mt-[8px] ml-[19px] flex w-[76px] shrink-0 flex-col items-end leading-[20px]">
        <Fit w={33}>12:01</Fit>
        <Fit w={75}>14-01-2023</Fit>
      </div>
      <Svg w={17} h={20} className="mt-[19px] ml-[10px]">
        <path d="M7 3.2Q3 4 3 8.5V12L1 15.3H15L13.5 12.5M6 16Q8 19.5 10 16" strokeWidth="1.4" />
        <path d="M6 6.8H10L6.3 12H10.3M12 1H15.7L12.2 6.5H16" strokeWidth="1.5" />
      </Svg>
    </footer>
  );
}

export default function App() {
  return (
    <div className="flex h-[1080px] w-[1920px] flex-col overflow-hidden font-['Open_Sans','Noto_Sans',sans-serif]">
      <TitleBar />
      <div className="flex h-[162px] shrink-0 flex-col bg-[linear-gradient(90deg,#e7eef1_0%,#e9eeef_25%,#eaefec_50%,#ebeee9_62%,#ececee_72%,#edebf1_100%)]">
        <Tabs />
        <Ribbon />
      </div>
      <div className="flex min-h-0 flex-1">
        <NavigationPane />
        <Document />
      </div>
      <StatusBar />
      <Taskbar />
    </div>
  );
}
